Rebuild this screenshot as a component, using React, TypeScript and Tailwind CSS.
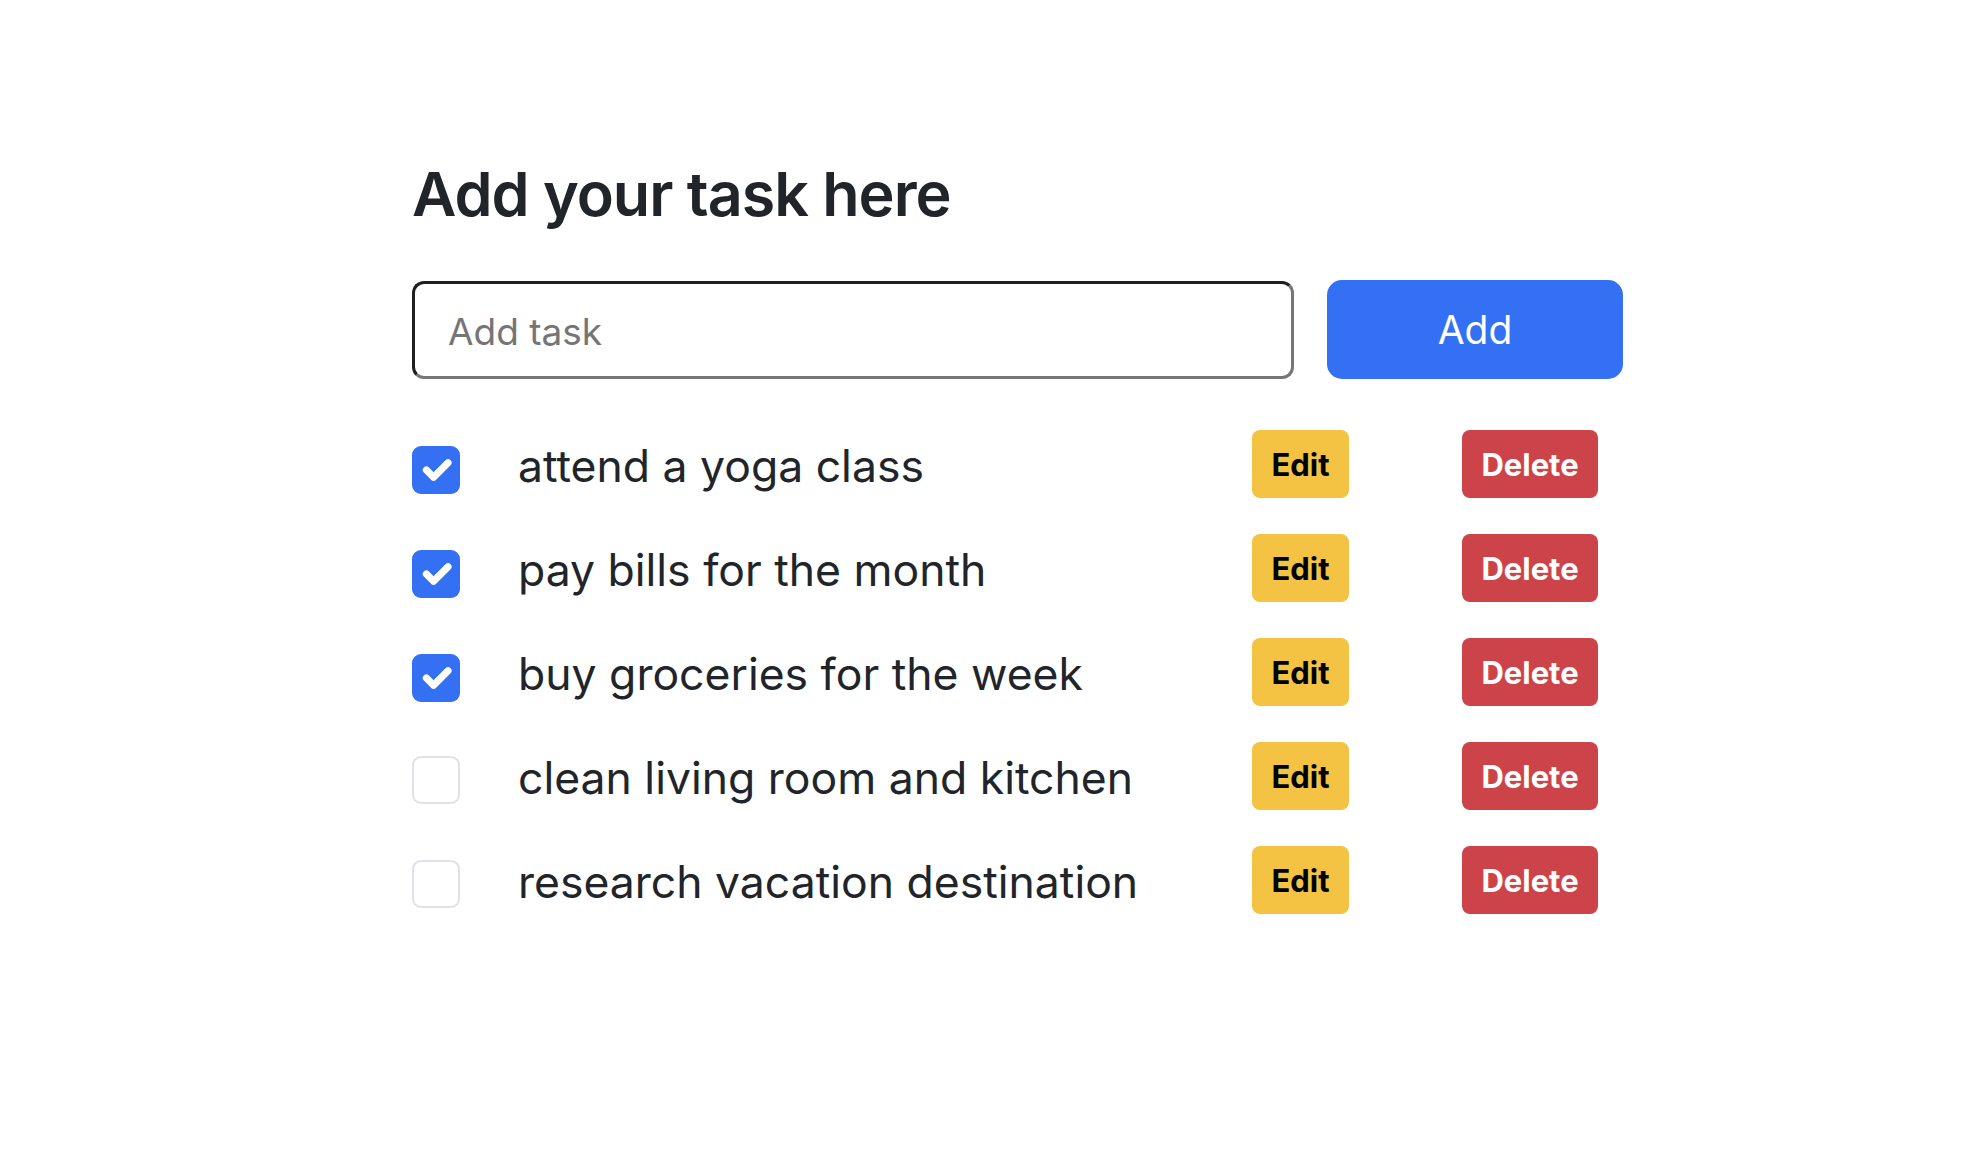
import React, { useState } from 'react'

type Task = {
  id: number
  title: string
  done: boolean
}

const initialTasks: Task[] = [
  { id: 1, title: 'attend a yoga class', done: true },
  { id: 2, title: 'pay bills for the month', done: true },
  { id: 3, title: 'buy groceries for the week', done: true },
  { id: 4, title: 'clean living room and kitchen', done: false },
  { id: 5, title: 'research vacation destination', done: false },
]

function CheckBox({ checked, onToggle }: { checked: boolean; onToggle: () => void }) {
  return (
    <button
      type="button"
      onClick={onToggle}
      className={
        checked
          ? 'w-12 h-12 shrink-0 rounded-[9px] bg-[#3470f4] flex items-center justify-center'
          : 'w-12 h-12 shrink-0 rounded-[9px] border-2 border-[#dee2e6] bg-white'
      }
    >
      {checked && (
        <svg viewBox="0 0 20 20" className="w-12 h-12">
          <path d="m6 10 3 3 6-6" fill="none" stroke="#fff" strokeWidth="3" strokeLinecap="round" strokeLinejoin="round" />
        </svg>
      )}
    </button>
  )
}

export default function App() {
  const [tasks, setTasks] = useState<Task[]>(initialTasks)
  const [text, setText] = useState('')

  const addTask = () => {
    if (!text.trim()) return
    setTasks([...tasks, { id: Date.now(), title: text.trim(), done: false }])
    setText('')
  }

  return (
    <div className="min-h-screen bg-white text-[#212529] font-['Inter',sans-serif]">
      <div className="pl-[412px] pt-[158px] w-[1623px]">
        <h1 className="text-[61px] leading-[1.2] font-semibold tracking-[-1px]">Add your task here</h1>

        <div className="mt-[50px] flex gap-[33px]">
          <input
            value={text}
            onChange={e => setText(e.target.value)}
            placeholder="Add task"
            className="w-[882px] h-[98px] rounded-[12px] border-[3px] border-t-[#1f1f1f] border-l-[#1f1f1f] border-b-[#767676] border-r-[#767676] px-[33px] pt-[2px] text-[37px] outline-none placeholder:text-[#757575]"
          />
          <button
            type="button"
            onClick={addTask}
            className="w-[296px] h-[99px] -mt-px rounded-[15px] bg-[#3470f4] text-white text-[39px] pt-[2px]"
          >
            Add
          </button>
        </div>

        <ul className="mt-[51px] flex flex-col gap-[36px]">
          {tasks.map(t => (
            <li key={t.id} className="flex items-center h-[68px]">
              <div className="mt-[12px]">
                <CheckBox
                  checked={t.done}
                  onToggle={() => setTasks(tasks.map(x => (x.id === t.id ? { ...x, done: !x.done } : x)))}
                />
              </div>
              <span className="ml-[58px] w-[734px] text-[44.5px] leading-none pt-[4px]">{t.title}</span>
              <button type="button" className="w-[97px] h-[68px] rounded-[8px] bg-[#f5c343] text-black text-[31px] font-bold pt-[2px]">
                Edit
              </button>
              <button
                type="button"
                onClick={() => setTasks(tasks.filter(x => x.id !== t.id))}
                className="ml-[113px] w-[136px] h-[68px] rounded-[8px] bg-[#cc444a] text-white text-[31px] font-bold pt-[2px]"
              >
                Delete
              </button>
            </li>
          ))}
        </ul>
      </div>
    </div>
  )
}
